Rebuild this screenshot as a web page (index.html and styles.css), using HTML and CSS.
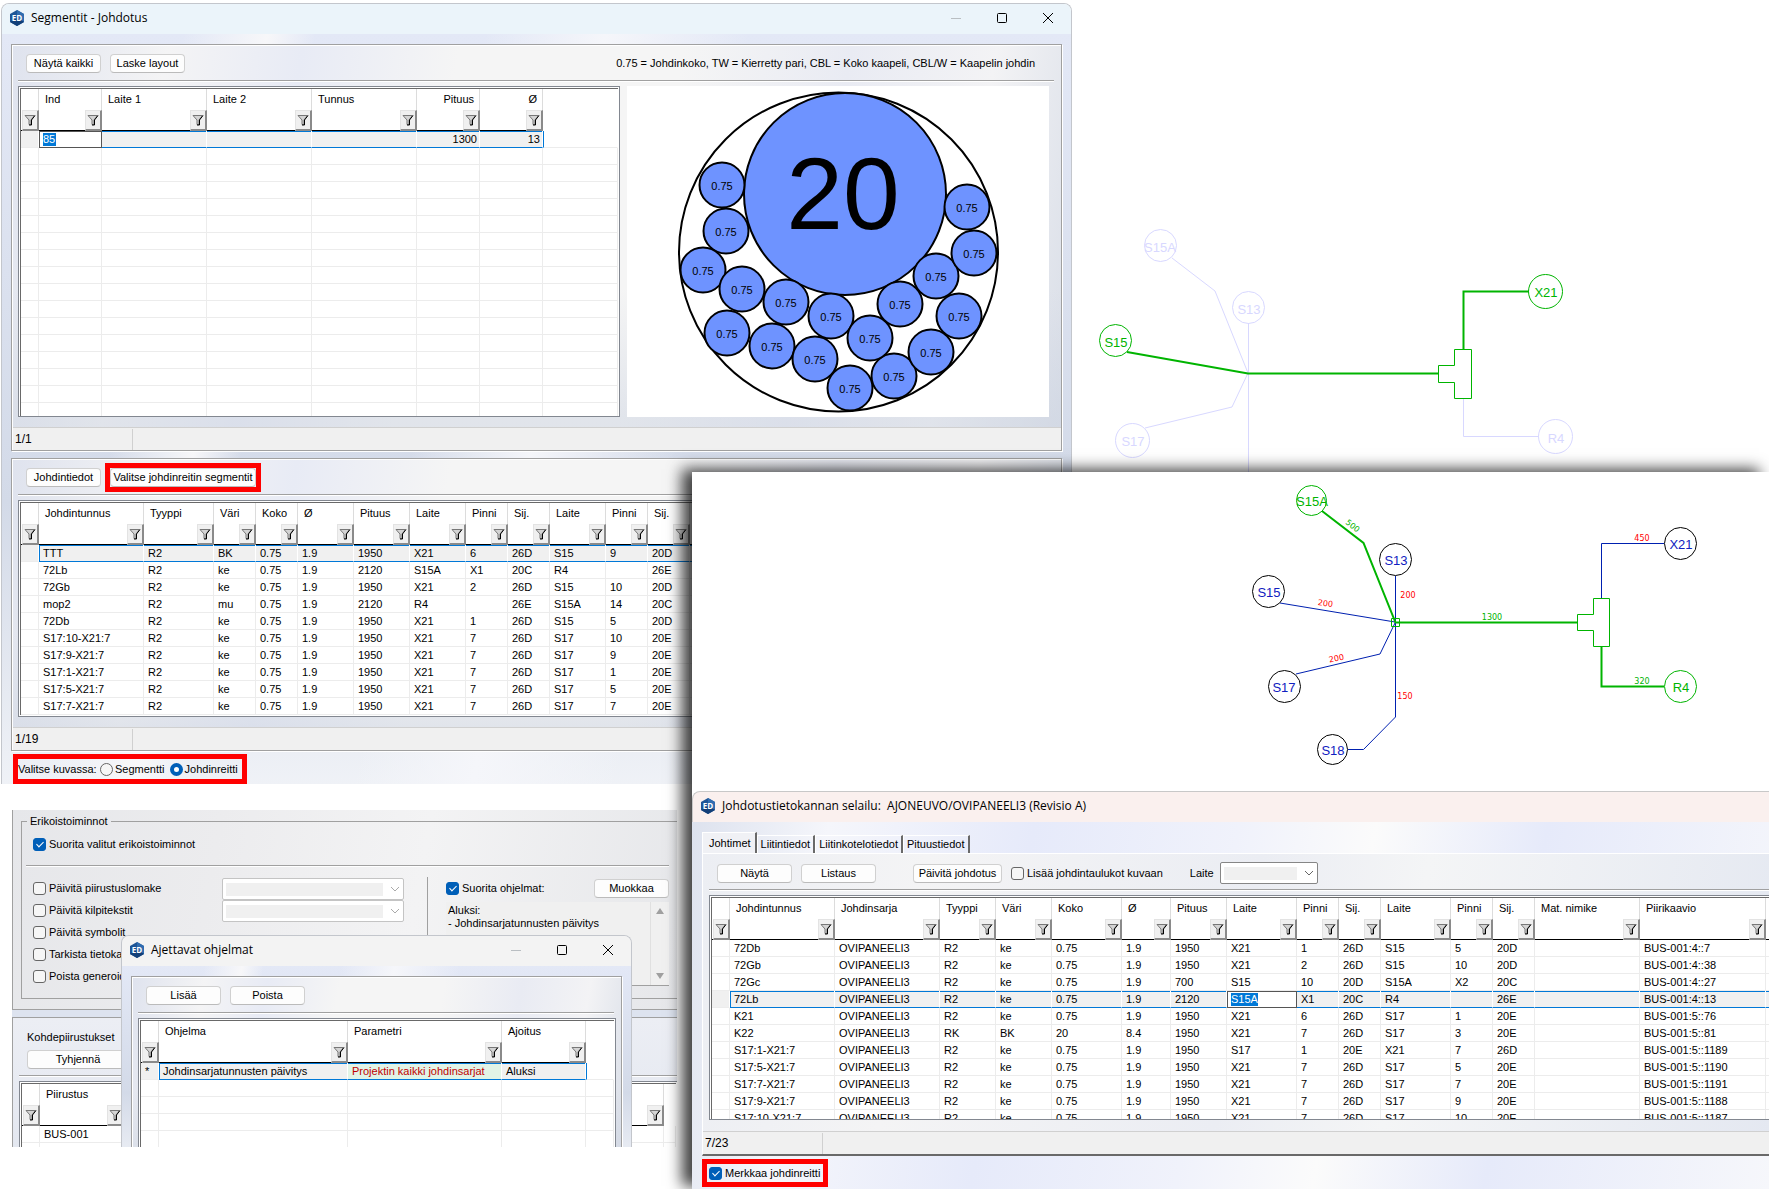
FILE: index.html
```
<!DOCTYPE html>
<html lang="fi">
<head>
    <meta charset="UTF-8">
    <meta name="viewport" content="width=device-width, initial-scale=1.0">
    <title>Segmentit - Johdotus</title>
    <link rel="stylesheet" href="styles.css">
</head>
<body>

<!-- shared icons -->
<svg class="defs" aria-hidden="true">
    <symbol id="icon-app" viewBox="0 0 16 16">
        <path d="M8 0 L15 4 V12 L8 16 L1 12 V4 Z" fill="#1d5596"/>
        <path d="M8 0 L15 4 V12 L8 8 Z" fill="#2f6cb0"/>
        <path d="M1 12 L8 8 L15 12 L8 16 Z" fill="#123f78"/>
        <text x="8" y="11" text-anchor="middle" class="app-letters">ED</text>
    </symbol>
    <symbol id="icon-filter" viewBox="0 0 12 12">
        <path d="M1 1.5 H10.5 L7 6 V10.5 H5 V6 Z" fill="#d4d4d4" stroke="#777"/>
        <path d="M11 1.5 L7.5 6 V11 H5" fill="none" stroke="#000"/>
    </symbol>
    <symbol id="icon-min" viewBox="0 0 10 10"><path d="M0 5.5 H10" stroke="#b9bec2"/></symbol>
    <symbol id="icon-max" viewBox="0 0 10 10"><rect x=".5" y=".5" width="9" height="9" rx="1" fill="none" stroke="#000"/></symbol>
    <symbol id="icon-close" viewBox="0 0 10 10"><path d="M0 0 L10 10 M10 0 L0 10" stroke="#000"/></symbol>
</svg>

<main class="desktop">

    <!-- segment drawing -->
    <svg class="drawing drawing-back" width="520" height="270" viewBox="1080 210 520 270">
        <g class="dim">
            <path d="M1172 258 L1215 291 L1248 373 M1248.5 323 V480 M1145 428 L1232 407 L1248 373 M1463.5 398 V436.5 H1539"/>
            <circle cx="1160.5" cy="245.5" r="16"/><text x="1160" y="252">S15A</text>
            <circle cx="1248.5" cy="307.5" r="16"/><text x="1249" y="314">S13</text>
            <circle cx="1132.5" cy="440.5" r="17"/><text x="1133" y="446">S17</text>
            <circle cx="1555.5" cy="436.5" r="17"/><text x="1556" y="443">R4</text>
        </g>
        <g class="route">
            <path class="thick" d="M1127 352 L1248 373.5 H1438 M1463.5 349 V291.5 H1529"/>
            <path d="M1438.5 365.5 H1454.5 V349.5 H1471.5 V398.5 H1454.5 V382.5 H1438.5 Z"/>
            <circle cx="1115.5" cy="340.5" r="16"/><text x="1116" y="347">S15</text>
            <circle cx="1545.5" cy="291.5" r="17"/><text x="1546" y="297">X21</text>
        </g>
    </svg>

    <!-- Segmentit window -->
    <section class="window window-segments">
        <header class="titlebar">
            <svg class="app-icon"><use href="#icon-app"/></svg>
            <h1>Segmentit - Johdotus</h1>
            <button class="win-btn" aria-label="Pienennä"><svg><use href="#icon-min"/></svg></button>
            <button class="win-btn" aria-label="Suurenna"><svg><use href="#icon-max"/></svg></button>
            <button class="win-btn" aria-label="Sulje"><svg><use href="#icon-close"/></svg></button>
        </header>
        <div class="window-body">
            <div class="panel">
                <div class="toolbar">
                    <button class="btn">Näytä kaikki</button>
                    <button class="btn">Laske layout</button>
                    <p class="legend">0.75 = Johdinkoko, TW = Kierretty pari, CBL = Koko kaapeli, CBL/W = Kaapelin johdin</p>
                </div>
                <div class="split">
                    <div class="grid-frame grid-segments"><table class="grid" id="segments"></table></div>
                    <div class="section-view">
                        <svg width="422" height="331" viewBox="627 86 422 331" id="bundle">
                            <circle cx="838.5" cy="252" r="159.5" class="bundle-outer"/>
                            <circle cx="845" cy="194" r="101" class="wire"/>
                            <text x="843" y="229" class="wire-big">20</text>
                        </svg>
                    </div>
                </div>
                <div class="statusbar"><span>1/1</span></div>
            </div>

            <div class="panel">
                <div class="toolbar">
                    <button class="btn">Johdintiedot</button>
                    <div class="mark mark-button"><button class="btn btn-wide">Valitse johdinreitin segmentit</button></div>
                </div>
                <div class="grid-frame grid-wires"><table class="grid" id="wires"></table></div>
                <div class="statusbar"><span>1/19</span></div>
            </div>

            <div class="mark mark-radios">
                <span>Valitse kuvassa:</span>
                <input type="radio" name="pick" id="pickSegment"><label for="pickSegment">Segmentti</label>
                <input type="radio" name="pick" id="pickRoute" checked><label for="pickRoute">Johdinreitti</label>
            </div>
        </div>
    </section>

    <!-- Erikoistoiminnot -->
    <section class="options">
        <div class="options-top">
            <fieldset class="group">
                <legend>Erikoistoiminnot</legend>
                <div class="check"><input type="checkbox" id="runSelected" checked><label for="runSelected">Suorita valitut erikoistoiminnot</label></div>
                <div class="group-cols">
                    <div class="checks">
                        <div class="check"><input type="checkbox" id="c1"><label for="c1">Päivitä piirustuslomake</label></div>
                        <div class="check"><input type="checkbox" id="c2"><label for="c2">Päivitä kilpitekstit</label></div>
                        <div class="check"><input type="checkbox" id="c3"><label for="c3">Päivitä symbolit</label></div>
                        <div class="check"><input type="checkbox" id="c4"><label for="c4">Tarkista tietoka</label></div>
                        <div class="check"><input type="checkbox" id="c5"><label for="c5">Poista generoid</label></div>
                    </div>
                    <div class="combos">
                        <select class="combo combo-off" aria-label="Piirustuslomake" disabled></select>
                        <select class="combo combo-off" aria-label="Kilpitekstit" disabled></select>
                    </div>
                    <div class="programs">
                        <div class="programs-head">
                            <input type="checkbox" id="runPrograms" checked><label for="runPrograms">Suorita ohjelmat:</label>
                            <button class="btn">Muokkaa</button>
                        </div>
                        <div class="program-list">
                            <textarea readonly aria-label="Ohjelmat">Aluksi:
- Johdinsarjatunnusten päivitys</textarea>
                            <div class="scroll"><i class="up"></i><i class="down"></i></div>
                        </div>
                    </div>
                </div>
            </fieldset>
        </div>
        <div class="options-bottom">
            <h2>Kohdepiirustukset</h2>
            <div class="toolbar toolbar-drawings"><button class="btn btn-drawings">Tyhjennä</button></div>
            <div class="grid-frame grid-drawings"><table class="grid" id="drawings"></table></div>
        </div>
    </section>

    <!-- Ajettavat ohjelmat dialog -->
    <section class="window window-programs">
        <header class="titlebar">
            <svg class="app-icon"><use href="#icon-app"/></svg>
            <h1>Ajettavat ohjelmat</h1>
            <button class="win-btn" aria-label="Pienennä"><svg><use href="#icon-min"/></svg></button>
            <button class="win-btn" aria-label="Suurenna"><svg><use href="#icon-max"/></svg></button>
            <button class="win-btn" aria-label="Sulje"><svg><use href="#icon-close"/></svg></button>
        </header>
        <div class="window-body">
            <div class="panel">
                <div class="toolbar">
                    <button class="btn">Lisää</button>
                    <button class="btn">Poista</button>
                </div>
                <div class="grid-frame"><table class="grid" id="programs"></table></div>
            </div>
        </div>
    </section>

    <!-- route drawing and database browser -->
    <section class="front">
        <svg class="drawing drawing-front" width="440" height="290" viewBox="1250 480 440 290">
            <g class="plain">
                <path d="M1395.5 576 V717 L1363.5 749.5 H1348 M1280 603 L1395 622 M1296 674 L1380 654 L1395 623 M1601.5 598 V543.5 H1664"/>
                <circle cx="1395.5" cy="559.5" r="16"/><text x="1396" y="565">S13</text>
                <circle cx="1268.5" cy="591.5" r="16"/><text x="1269" y="597">S15</text>
                <circle cx="1284.5" cy="686.5" r="16"/><text x="1284" y="692">S17</text>
                <circle cx="1332.5" cy="749.5" r="15"/><text x="1333" y="755">S18</text>
                <circle cx="1680.5" cy="543.5" r="16"/><text x="1681" y="549">X21</text>
            </g>
            <g class="route">
                <path class="thick" d="M1322 511 L1363.5 543 L1395.5 622.5 H1577 M1601.5 646 V686.5 H1664"/>
                <path d="M1577.5 614.5 H1593.5 V598.5 H1609.5 V646.5 H1593.5 V630.5 H1577.5 Z M1391.5 618.5 H1399.5 V626.5 H1391.5 Z"/>
                <circle cx="1311.5" cy="500.5" r="15"/><text x="1312" y="506">S15A</text>
                <circle cx="1680.5" cy="686.5" r="16"/><text x="1681" y="692">R4</text>
            </g>
            <g class="length">
                <text x="1325" y="606" transform="rotate(8 1325 606)">200</text>
                <text x="1408" y="598">200</text>
                <text x="1337" y="661" transform="rotate(-12 1337 661)">200</text>
                <text x="1405" y="699">150</text>
                <text x="1642" y="541">450</text>
                <text class="on-route" x="1351" y="528" transform="rotate(38 1351 528)">500</text>
                <text class="on-route" x="1492" y="620">1300</text>
                <text class="on-route" x="1642" y="684">320</text>
            </g>
        </svg>

        <div class="browser">
            <header class="titlebar">
                <svg class="app-icon"><use href="#icon-app"/></svg>
                <h1>Johdotustietokannan selailu:&nbsp; AJONEUVO/OVIPANEELI3 (Revisio A)</h1>
            </header>
            <div class="browser-body">
                <nav class="tabs" role="tablist">
                    <button class="tab active" role="tab">Johtimet</button>
                    <button class="tab" role="tab">Liitintiedot</button>
                    <button class="tab" role="tab">Liitinkotelotiedot</button>
                    <button class="tab" role="tab">Pituustiedot</button>
                </nav>
                <div class="tab-page">
                    <div class="toolbar toolbar-browser">
                        <button class="btn">Näytä</button>
                        <button class="btn">Listaus</button>
                        <button class="btn btn-update">Päivitä johdotus</button>
                        <input type="checkbox" id="addTables"><label for="addTables">Lisää johdintaulukot kuvaan</label>
                        <label class="device-label" for="device">Laite</label>
                        <select class="combo" id="device"></select>
                    </div>
                    <div class="grid-frame grid-browser"><table class="grid" id="browser"></table></div>
                    <div class="statusbar"><span>7/23</span></div>
                </div>
                <div class="mark mark-check">
                    <input type="checkbox" id="markRoute" checked><label for="markRoute">Merkkaa johdinreitti</label>
                </div>
            </div>
        </div>
    </section>

</main>

<script src="script.js"></script>
</body>
</html>
```
FILE: styles.css
```
* {
    box-sizing: border-box;
}

body {
    margin: 0;
    background: #fff;
    color: #000;
    font-family: "Liberation Sans", Arial, sans-serif;
    font-size: 11px;
    line-height: 13px;
}

button, input, select, textarea {
    margin: 0;
    font: inherit;
    color: inherit;
}

h1, h2, p {
    margin: 0;
    font-weight: normal;
}

.defs {
    display: none;
}

.desktop {
    position: relative;
    height: 100vh;
    overflow: hidden;
}

/* windows */
.window {
    position: absolute;
    border: 1px solid #c3c6cc;
    border-bottom: 0;
    border-radius: 8px 8px 0 0;
    overflow: hidden;
}

.window-segments {
    left: 1px;
    top: 3px;
    width: 1071px;
    height: 781px;
}

.window-programs {
    left: 121px;
    top: 935px;
    width: 511px;
    height: 212px;
}

.titlebar {
    display: flex;
    align-items: center;
    height: 30px;
    padding: 0 0 2px 7px;
    background: #ebf4fa;
    font-family: "Open Sans", "Noto Sans", sans-serif;
}

.window-programs .titlebar {
    background: #f3f3f3;
}

.titlebar h1 {
    flex: 1;
    margin-left: 6px;
    font-size: 12px;
    line-height: 16px;
}

.app-icon {
    width: 16px;
    height: 16px;
}

.app-letters {
    font: bold 8px "Open Sans", sans-serif;
    fill: #fff;
}

.win-btn {
    display: flex;
    align-items: center;
    justify-content: center;
    width: 46px;
    height: 27px;
    padding: 0;
    border: 0;
    background: none;
}

.win-btn svg {
    width: 10px;
    height: 10px;
}

.window-body {
    display: flex;
    flex-direction: column;
    gap: 7px;
    height: 100%;
    padding: 10px 9px 0 9px;
    background:
        linear-gradient(100deg, transparent 15%, #f7f7f9 22%, transparent 26%, transparent 40%, #f5f6fa 50%, transparent 62%),
        linear-gradient(to bottom, #e3e8f6, #d3dae8 60%, #f2f4f8);
}

.panel {
    padding: 0 0 0 6px;
    border: 1px solid #a0a0a0;
    box-shadow: inset 1px 1px 0 #fff, 1px 1px 0 #fff;
    background:
        linear-gradient(to bottom, transparent 60%, rgba(205, 212, 225, .5) 92%),
        linear-gradient(100deg, #dfe3ee, #f4f4f5 14%, #e8ebf5 26%, #f5f5f5 40%, #f5f5f5 60%, #e9ebf3 75%, #f3f3f5 88%, #d8dde7);
}

.toolbar {
    display: flex;
    align-items: center;
    gap: 9px;
    height: 36px;
    margin-right: 7px;
    padding: 9px 0 7px 8px;
    border-bottom: 1px solid #a0a0a0;
    box-shadow: 0 1px 0 #fff;
}

.legend {
    margin-left: auto;
    padding-right: 19px;
    white-space: nowrap;
}

.btn {
    min-width: 75px;
    height: 19px;
    padding: 0 4px;
    border: 1px solid #d0d0d0;
    border-bottom-color: #bbb;
    border-radius: 4px;
    background: #fdfdfd;
    line-height: 13px;
    white-space: nowrap;
}

.split {
    display: flex;
    gap: 7px;
}

.section-view {
    width: 422px;
    height: 331px;
    margin-top: 5px;
    background: #fff;
}

.section-view svg {
    display: block;
}

.bundle-outer {
    fill: none;
    stroke: #000;
    stroke-width: 2;
}

.wire {
    fill: #6e93ff;
    stroke: #000;
    stroke-width: 2;
}

.wire-big {
    font-size: 102px;
    text-anchor: middle;
}

.wire-small {
    font-size: 11px;
    text-anchor: middle;
}

.statusbar {
    height: 23px;
    margin: 10px 0 0 -5px;
    border-top: 1px solid #d0d0d0;
    background: #f0f0f0;
}

.statusbar span {
    display: block;
    width: 120px;
    height: 21px;
    margin-top: 1px;
    padding-left: 2px;
    border-right: 1px solid #d0d0d0;
    line-height: 21px;
    font-size: 12px;
}

.mark {
    display: flex;
    align-items: center;
    border: 5px solid #f00;
}

.mark-button {
    margin-left: -5px;
}

.btn-wide {
    width: 146px;
    padding: 0;
}

.mark-radios {
    align-self: flex-start;
    width: 234px;
    height: 30px;
    margin: -4px 0 0 2px;
    white-space: nowrap;
}

.mark-radios span {
    flex: none;
    width: 82px;
}

.mark-radios label {
    margin: 0 5px 0 2px;
}

.mark-radios label:last-child {
    margin-right: 0;
}

/* data grids */
.grid-frame {
    margin-top: 5px;
    padding: 1px;
    border: 1px solid #828790;
    background: #fff;
    overflow: hidden;
}

.grid {
    width: 100%;
    border-collapse: separate;
    border-spacing: 0;
    border-top: 1px solid #696969;
    border-left: 1px solid #696969;
    table-layout: fixed;
    background: #fff;
}

.grid-segments {
    width: 602px;
    height: 331px;
}

.grid-wires {
    height: 217px;
    margin-right: 7px;
}

.grid-browser {
    height: 225px;
    margin-right: -1px;
}

.grid-browser .grid, .grid-wires .grid {
    width: max-content;
}

.window-programs .grid-frame {
    margin-right: 5px;
}

.grid th {
    height: 42px;
    padding: 0;
    text-align: left;
    font-weight: normal;
    vertical-align: top;
}

.grid th span {
    display: block;
    height: 21px;
    padding-left: 6px;
    border-right: 1px solid #dcdcdc;
    line-height: 20px;
}

.grid th.right span {
    padding-right: 5px;
    text-align: right;
}

.grid th div {
    display: flex;
    justify-content: flex-end;
    height: 21px;
    box-shadow: inset 0 -1px 0 #000;
}

.filter {
    display: flex;
    align-items: center;
    justify-content: center;
    width: 17px;
    height: 21px;
    padding: 0;
    border: 1px solid #e3e3e3;
    border-right: 2px solid #8a8a8a;
    border-bottom: 2px solid #8a8a8a;
    background: #f0f0f0;
}

.filter svg {
    flex: none;
    width: 12px;
    height: 12px;
}

.grid td {
    height: 17px;
    padding: 0 2px 0 4px;
    border-right: 1px solid #ececec;
    border-bottom: 1px solid #ececec;
    line-height: 16px;
    white-space: nowrap;
    overflow: hidden;
}

.grid td.right {
    text-align: right;
}

.grid tr.current td {
    background: #f0f0f0;
    border-right-color: #fff;
    border-bottom-color: #0078d7;
    box-shadow: inset 0 1px 0 #0078d7;
}

.grid tr.current td:first-child, .grid tr.current td.filler {
    border-bottom-color: #ececec;
    box-shadow: none;
}

.grid tr.current td.filler {
    background: #fff;
    border-left: 1px solid #0078d7;
}

.grid tr.current td:nth-child(2) {
    padding-left: 3px;
    border-left: 1px solid #0078d7;
}

.grid tr.current td.edit {
    padding: 0 3px;
    border: 1px solid #555;
    background: #fff;
    box-shadow: none;
}

.grid tr.current td.param {
    background: #e2f4e6;
    color: #c00000;
}

.cell-edit {
    display: block;
    height: 13px;
    padding: 0;
    border: 0;
    background: #0078d7;
    color: #fff;
    line-height: 13px;
}

/* check boxes, radios and drop-downs */
input[type="checkbox"], input[type="radio"] {
    appearance: none;
    flex: none;
    width: 13px;
    height: 13px;
    border: 1px solid #666;
    border-radius: 3px;
    background: #f6f6f6;
}

input[type="checkbox"]:checked {
    border-color: #005fb8;
    background: #005fb8;
}

input[type="checkbox"]:checked::after {
    content: "";
    display: block;
    width: 3px;
    height: 6px;
    margin: 1px 0 0 4px;
    border: solid #fff;
    border-width: 0 1px 1px 0;
    transform: rotate(45deg);
}

input[type="radio"] {
    border-radius: 50%;
}

input[type="radio"]:checked {
    border: 4px solid #005fb8;
    background: #fff;
}

.combo {
    --arrow: #666;
    appearance: none;
    height: 22px;
    border: 1px solid #868686;
    border-radius: 2px;
    background:
        linear-gradient(#f0f0f0, #f0f0f0) 3px 4px / calc(100% - 23px) 13px no-repeat,
        linear-gradient(45deg, transparent 42%, var(--arrow) 42%, var(--arrow) 58%, transparent 58%) right 8px center / 4px 4px no-repeat,
        linear-gradient(-45deg, transparent 42%, var(--arrow) 42%, var(--arrow) 58%, transparent 58%) right 4px center / 4px 4px no-repeat,
        #fff;
}

.combo-off {
    --arrow: #aaa;
    width: 182px;
    border-color: #c4c4c4;
    opacity: 1;
}

/* special functions page */
.options {
    position: absolute;
    left: 12px;
    top: 810px;
    width: 665px;
    height: 337px;
    overflow: hidden;
    background: #dde3ef;
}

.options-top {
    height: 200px;
    padding: 5px 0 0 8px;
    border: solid #a0a0a0;
    border-width: 0 0 1px 1px;
    background: linear-gradient(100deg, #e6e7ea, #ececee 30%, #f3f3f4 60%, #e6e7ea);
}

.group {
    height: 184px;
    min-width: 0;
    margin: 0;
    padding: 6px 8px 0 4px;
    border: 1px solid #a0a0a0;
    border-right: 0;
}

.group legend {
    margin-left: 1px;
    padding: 0 3px;
}

.group > .check {
    height: 32px;
    padding: 0 0 11px 7px;
    border-bottom: 1px solid #a0a0a0;
    box-shadow: 0 1px 0 #fff;
}

.check {
    display: flex;
    align-items: center;
    gap: 3px;
    height: 22px;
}

.group-cols {
    display: flex;
    padding-top: 11px;
}

.checks {
    width: 196px;
    padding-left: 7px;
}

.combos {
    display: flex;
    flex-direction: column;
    padding-top: 1px;
    width: 205px;
}

.programs {
    flex: 1;
    padding-left: 18px;
    border-left: 1px solid #a0a0a0;
}

.programs-head {
    display: flex;
    align-items: center;
    gap: 3px;
    height: 22px;
}

.programs-head .btn {
    margin-left: auto;
}

.program-list {
    display: flex;
    height: 84px;
    margin-top: 3px;
    border-bottom: 1px solid #a0a0a0;
    background: #f0f0f0;
}

.program-list textarea {
    flex: 1;
    padding: 2px;
    border: 0;
    background: none;
    resize: none;
    outline: none;
}

.scroll {
    display: flex;
    flex-direction: column;
    justify-content: space-between;
    padding: 6px 5px;
    border-left: 1px solid #e0e0e0;
}

.scroll i {
    border: 4px solid transparent;
}

.scroll .up {
    border-top: 0;
    border-bottom: 6px solid #a0a0a0;
}

.scroll .down {
    border-bottom: 0;
    border-top: 6px solid #a0a0a0;
}

.options-bottom {
    height: 200px;
    margin-top: 7px;
    padding: 13px 0 0 6px;
    border: solid #a0a0a0;
    border-width: 1px 0 0 1px;
    background: linear-gradient(#eceef4, #dfe4ee);
}

.options h2 {
    padding-left: 8px;
    font-size: 11px;
}

.toolbar-drawings {
    height: 32px;
    margin-right: 0;
    padding-top: 6px;
}

.btn-drawings {
    width: 102px;
}

.grid-drawings {
    border-right: 0;
}

/* drawings */
.drawing {
    position: absolute;
    overflow: visible;
    fill: none;
    stroke-width: 1;
}

.drawing text {
    font-size: 13px;
    text-anchor: middle;
    stroke: none;
}

.drawing-back {
    left: 1080px;
    top: 210px;
}

.drawing-front {
    right: 79px;
    top: 8px;
}

.dim {
    stroke: #d8d8ff;
}

.dim text {
    fill: #d8d8ff;
}

.route {
    stroke: #00b400;
}

.route text {
    fill: #00b400;
}

.route .thick {
    stroke-width: 2;
}

.plain path {
    stroke: #0020b0;
}

.plain circle {
    stroke: #000;
}

.plain text {
    fill: #1020c0;
}

.drawing .length text {
    font-family: "DejaVu Sans", sans-serif;
    font-size: 8px;
    fill: #f00;
}

.drawing .length .on-route {
    fill: #00b400;
}

/* front page with the browser window */
.front {
    position: absolute;
    left: 692px;
    top: 472px;
    right: 0;
    bottom: 0;
    background: #fff;
    box-shadow: -10px -3px 14px rgba(0, 0, 0, .75);
}

.browser {
    height: 100%;
    padding-top: 319px;
}

.browser .titlebar {
    height: 31px;
    border-top: 1px solid #c8c8c8;
    border-left: 1px solid #c8c8c8;
    border-radius: 8px 0 0 0;
    background: #faf0ee;
}

.browser-body {
    height: 367px;
    padding: 11px 0 0 10px;
    background: linear-gradient(100deg, #dde2ee, #f5f6fb 12%, #e6eafa 30%, #f0f2fb 48%, #fbfbfb 60%, #e6eafa 75%, #f6f7fb);
}

.tabs {
    display: flex;
    align-items: flex-end;
    height: 20px;
}

.tab {
    height: 18px;
    padding: 0 3px;
    border: 1px solid #fff;
    border-right: 2px solid #696969;
    border-bottom: 0;
    background: none;
}

.tab.active {
    height: 21px;
    padding: 0 4px 0 6px;
    background: #f0f1f5;
}

.tab-page {
    border-top: 1px solid #fff;
    border-left: 1px solid #fff;
    border-bottom: 2px solid #696969;
    padding-left: 6px;
    background: linear-gradient(100deg, #eceef3, #f4f4f5 20%, #ebedf3 50%, #f4f5f6 65%, #e4e8f1);
}

.toolbar-browser {
    margin-right: 0;
    padding-top: 10px;
}

.btn-update {
    width: 89px;
    min-width: 0;
    margin-left: 28px;
    padding: 0;
}

.toolbar-browser label {
    margin-left: -6px;
}

.toolbar-browser .device-label {
    margin-left: 18px;
}

.toolbar-browser .combo {
    width: 98px;
    margin-left: -3px;
}

.tab-page .statusbar {
    margin-top: 11px;
    margin-left: -6px;
}

.mark-check {
    gap: 3px;
    width: 126px;
    height: 28px;
    margin-top: 3px;
    padding-left: 2px;
    white-space: nowrap;
}
```
FILE: script.js
```
const FILTER = '<button class="filter" aria-label="Suodata"><svg><use href="#icon-filter"/></svg></button>';

// cols: [title, width, align], rows: array of cell arrays
function buildGrid(id, cols, rows, options = {}) {
    const table = document.getElementById(id);
    const { current = -1, edit = -1, editWidth = 0, param = -1, blank = 0, filler = false } = options;
    let html = "<colgroup>";
    cols.forEach(c => html += `<col style="width:${c[1]}px">`);
    if (filler) html += "<col>";
    html += "</colgroup><thead><tr>";
    cols.forEach(c => html += `<th class="${c[2] || ""}"><span>${c[0]}</span><div>${FILTER}</div></th>`);
    if (filler) html += "<th></th>";
    html += "</tr></thead><tbody>";

    for (let r = 0; r < rows.length + blank; r++) {
        const row = rows[r] || [];
        html += r === current ? '<tr class="current">' : "<tr>";
        cols.forEach((c, i) => {
            let cls = c[2] || "";
            let text = row[i] || "";
            if (r === current && i === edit) {
                cls = "edit";
                text = `<input class="cell-edit" aria-label="${c[0]}" value="${text}" style="width:${editWidth}px">`;
            }
            if (r === current && i === param) cls = "param";
            html += `<td class="${cls}">${text}</td>`;
        });
        if (filler) html += '<td class="filler"></td>';
        html += "</tr>";
    }
    table.innerHTML = html + "</tbody>";
}

buildGrid("segments",
    [["", 18], ["Ind", 63], ["Laite 1", 105], ["Laite 2", 105], ["Tunnus", 105], ["Pituus", 63, "right"], ["Ø", 63, "right"]],
    [["", "85", "", "", "", "1300", "13"]],
    { current: 0, edit: 1, editWidth: 13, blank: 16, filler: true });

buildGrid("wires",
    [["", 18], ["Johdintunnus", 105], ["Tyyppi", 70], ["Väri", 42], ["Koko", 42], ["Ø", 56], ["Pituus", 56], ["Laite", 56],
     ["Pinni", 42], ["Sij.", 42], ["Laite", 56], ["Pinni", 42], ["Sij.", 42], ["", 105]],
    [
        ["", "TTT", "R2", "BK", "0.75", "1.9", "1950", "X21", "6", "26D", "S15", "9", "20D"],
        ["", "72Lb", "R2", "ke", "0.75", "1.9", "2120", "S15A", "X1", "20C", "R4", "", "26E"],
        ["", "72Gb", "R2", "ke", "0.75", "1.9", "1950", "X21", "2", "26D", "S15", "10", "20D"],
        ["", "mop2", "R2", "mu", "0.75", "1.9", "2120", "R4", "", "26E", "S15A", "14", "20C"],
        ["", "72Db", "R2", "ke", "0.75", "1.9", "1950", "X21", "1", "26D", "S15", "5", "20D"],
        ["", "S17:10-X21:7", "R2", "ke", "0.75", "1.9", "1950", "X21", "7", "26D", "S17", "10", "20E"],
        ["", "S17:9-X21:7", "R2", "ke", "0.75", "1.9", "1950", "X21", "7", "26D", "S17", "9", "20E"],
        ["", "S17:1-X21:7", "R2", "ke", "0.75", "1.9", "1950", "X21", "7", "26D", "S17", "1", "20E"],
        ["", "S17:5-X21:7", "R2", "ke", "0.75", "1.9", "1950", "X21", "7", "26D", "S17", "5", "20E"],
        ["", "S17:7-X21:7", "R2", "ke", "0.75", "1.9", "1950", "X21", "7", "26D", "S17", "7", "20E"]
    ],
    { current: 0 });

buildGrid("drawings",
    [["", 18], ["Piirustus", 84], ["", 540]],
    [["", "BUS-001"]],
    { blank: 2, filler: true });

buildGrid("programs",
    [["", 18], ["Ohjelma", 189], ["Parametri", 154], ["Ajoitus", 84]],
    [["*", "Johdinsarjatunnusten päivitys", "Projektin kaikki johdinsarjat", "Aluksi"]],
    { current: 0, param: 2, blank: 5, filler: true });

buildGrid("browser",
    [["", 18], ["Johdintunnus", 105], ["Johdinsarja", 105], ["Tyyppi", 56], ["Väri", 56], ["Koko", 70], ["Ø", 49], ["Pituus", 56],
     ["Laite", 70], ["Pinni", 42], ["Sij.", 42], ["Laite", 70], ["Pinni", 42], ["Sij.", 42], ["Mat. nimike", 105], ["Piirikaavio", 126], ["", 105]],
    [
        ["", "72Db", "OVIPANEELI3", "R2", "ke", "0.75", "1.9", "1950", "X21", "1", "26D", "S15", "5", "20D", "", "BUS-001:4::7"],
        ["", "72Gb", "OVIPANEELI3", "R2", "ke", "0.75", "1.9", "1950", "X21", "2", "26D", "S15", "10", "20D", "", "BUS-001:4::38"],
        ["", "72Gc", "OVIPANEELI3", "R2", "ke", "0.75", "1.9", "700", "S15", "10", "20D", "S15A", "X2", "20C", "", "BUS-001:4::27"],
        ["", "72Lb", "OVIPANEELI3", "R2", "ke", "0.75", "1.9", "2120", "S15A", "X1", "20C", "R4", "", "26E", "", "BUS-001:4::13"],
        ["", "K21", "OVIPANEELI3", "R2", "ke", "0.75", "1.9", "1950", "X21", "6", "26D", "S17", "1", "20E", "", "BUS-001:5::76"],
        ["", "K22", "OVIPANEELI3", "RK", "BK", "20", "8.4", "1950", "X21", "7", "26D", "S17", "3", "20E", "", "BUS-001:5::81"],
        ["", "S17:1-X21:7", "OVIPANEELI3", "R2", "ke", "0.75", "1.9", "1950", "S17", "1", "20E", "X21", "7", "26D", "", "BUS-001:5::1189"],
        ["", "S17:5-X21:7", "OVIPANEELI3", "R2", "ke", "0.75", "1.9", "1950", "X21", "7", "26D", "S17", "5", "20E", "", "BUS-001:5::1190"],
        ["", "S17:7-X21:7", "OVIPANEELI3", "R2", "ke", "0.75", "1.9", "1950", "X21", "7", "26D", "S17", "7", "20E", "", "BUS-001:5::1191"],
        ["", "S17:9-X21:7", "OVIPANEELI3", "R2", "ke", "0.75", "1.9", "1950", "X21", "7", "26D", "S17", "9", "20E", "", "BUS-001:5::1188"],
        ["", "S17:10-X21:7", "OVIPANEELI3", "R2", "ke", "0.75", "1.9", "1950", "X21", "7", "26D", "S17", "10", "20E", "", "BUS-001:5::1187"]
    ],
    { current: 3, edit: 8, editWidth: 27 });

// small wires of the bundle cross-section
const wires = [
    [722, 185], [726, 231], [703, 270], [742, 289], [786, 302], [831, 316],
    [727, 333], [772, 346], [815, 359], [850, 388], [894, 376], [870, 338],
    [900, 304], [931, 352], [959, 316], [936, 276], [967, 207], [974, 253]
];
let circles = "";
wires.forEach(([x, y]) => {
    circles += `<circle cx="${x}" cy="${y}" r="22.5" class="wire"/><text x="${x}" y="${y + 5}" class="wire-small">0.75</text>`;
});
document.getElementById("bundle").innerHTML += circles;
```
